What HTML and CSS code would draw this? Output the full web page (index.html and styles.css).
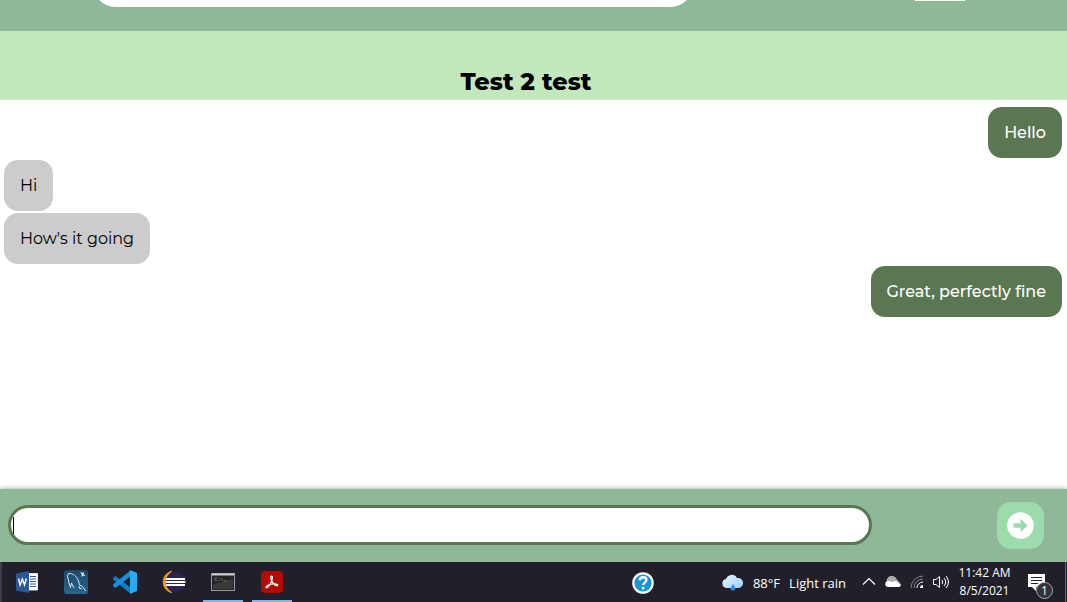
FILE: index.html
```html
<!DOCTYPE html>
<html lang="en">
<head>
<meta charset="utf-8">
<title>Test 2 test</title>
<link rel="stylesheet" href="styles.css">
</head>
<body>
<header class="topbar">
  <input class="search" type="search" aria-label="Search">
  <a class="nav-link" href="#" aria-label="Messages"></a>
</header>
<h1 class="chat-title">Test 2 test</h1>
<main class="messages">
  <p class="bubble sent">Hello</p>
  <p class="bubble received">Hi</p>
  <p class="bubble received">How's it going</p>
  <p class="bubble sent">Great, perfectly fine</p>
</main>
<form class="composer">
  <div class="field">
    <input class="message-input" type="text" aria-label="Message">
    <span class="caret"></span>
  </div>
  <button class="send" type="button" aria-label="Send">
    <svg width="27" height="27" viewBox="0 0 27 27"><circle cx="13.5" cy="13.5" r="13.3" fill="#fff"/><path d="M6.500 11.200h7V6.800l7.200 6.700-7.200 6.700v-4.400h-7z" fill="#9ddbad"/></svg>
  </button>
</form>
<footer class="taskbar">
  <nav class="apps">
    <button class="app" aria-label="Word">
      <svg width="24" height="24" viewBox="0 0 24 24"><path d="M11 3.500h11.500v16.500H11z" fill="#fff" stroke="#dfe6f1"/><path d="M15 6.500h6M15 9h6M15 11.500h6M15 14h6M15 16.500h6" stroke="#2b579a"/><path d="M1 3.500 14 1v22L1 20.500z" fill="#2b579a"/><path d="m3.500 8.500 1.600 6.500 2.200-6 2.200 6 1.800-6.500" fill="none" stroke="#fff" stroke-width="1.400"/></svg>
    </button>
    <button class="app" aria-label="MySQL Workbench">
      <svg width="24" height="24" viewBox="0 0 24 24"><defs><linearGradient id="sea" x2="0" y2="1"><stop stop-color="#1c4668"/><stop offset="1" stop-color="#28668e"/></linearGradient></defs><rect width="24" height="24" rx="3" fill="url(#sea)"/><path d="M6.500 17.500 5 13 3.500 6l1-2.500C9 3 13 6.500 14.500 11l1 4 3 1.500 3 4.500M6.500 17.500 7.500 13l2.500 5M15.500 16l-.5 2 3 1" fill="none" stroke="#d5e6f0" stroke-width="1"/><path d="m16 2 2.500 1L20 2l-.5 2.500L22 6l-3-.3L17.500 7l.3-2.500z" fill="#e6f1f7"/></svg>
    </button>
    <button class="app" aria-label="Visual Studio Code">
      <svg width="24" height="24" viewBox="0 0 24 24"><path d="m0 8 2.500-2L18 18v6L0 9.500z" fill="#0b7fc7"/><path d="m0 16 2.500 2L18 6V0L0 14.500z" fill="#148fd8"/><path d="m17 0 7 3v18l-7 3z" fill="#2aaaf2"/></svg>
    </button>
    <button class="app" aria-label="Eclipse">
      <svg width="24" height="24" viewBox="0 0 24 24"><path d="M10 1.200a11 11 0 0 0 0 21.600A12.500 12.500 0 0 1 10 1.200z" fill="#f7941e" stroke="#f7941e"/><circle cx="13.500" cy="12" r="10" fill="#2c2255"/><path d="M4 9h19M3.500 12h20M4 15h19" stroke="#fff" stroke-width="2"/></svg>
    </button>
    <button class="app open" aria-label="Command Prompt">
      <svg width="24" height="24" viewBox="0 0 24 24"><rect x=".5" y="3.500" width="23" height="17" fill="#242525" stroke="#999"/><path d="M1 4.500h22" stroke="#ccc" stroke-width="2"/><path d="M2 14 22 9v10H2z" fill="#383a3a"/><path d="M6.500 8H4v2.500h2.500M8.500 8v.8M8.500 10v.8M10 8l2 3M13 11h3" fill="none" stroke="#777" stroke-width=".8"/></svg>
    </button>
    <button class="app open" aria-label="Acrobat Reader">
      <svg width="22" height="22" viewBox="0 0 22 22"><rect width="22" height="22" rx="4" fill="#b30b00"/><path d="M10.500 5c2 0 .5 5-1.500 8.500-2 3.300-4 4-4 2.700 0-1.500 4-3 7-3.200 4-.3 5.500.7 4.500 1.600-1.500 1-5-2.200-6-5.300C9.700 7 9.500 5 10.500 5z" fill="none" stroke="#fff" stroke-width="1.200"/></svg>
    </button>
  </nav>
  <div class="tray">
    <button class="tray-icon help" aria-label="Help">
      <svg width="24" height="24" viewBox="0 0 24 24"><circle cx="12" cy="12" r="9.700" fill="#1297d8" stroke="#fff" stroke-width="2.200"/><path d="M8.800 9.300c.2-2 1.400-3 3.300-3 2 0 3.300 1.100 3.300 2.800 0 2.600-3.200 2.500-3.200 5" fill="none" stroke="#fff" stroke-width="2.400"/><circle cx="12.100" cy="17" r="1.500" fill="#fff"/></svg>
    </button>
    <button class="weather">
      <svg width="22" height="18" viewBox="0 0 22 18"><defs><linearGradient id="cloud" x2="1" y2="1"><stop stop-color="#e8f7ff"/><stop offset="1" stop-color="#9cd1fa"/></linearGradient></defs><path d="M4.500 14a4.500 4.500 0 0 1-.5-8.900 6 6 0 0 1 11-1.100A5 5 0 1 1 17 14z" fill="url(#cloud)"/><path d="M11 10c3.500 4.500 2.500 6.500 0 6.500s-3.500-2 0-6.500z" fill="#2f8fe3"/></svg>
      <span>88°F</span><span>Light rain</span>
    </button>
    <button class="tray-icon" aria-label="Show hidden icons">
      <svg width="14" height="10" viewBox="0 0 14 10"><path d="m1 7.500 6-6 6 6" fill="none" stroke="#fff" stroke-width="1.200"/></svg>
    </button>
    <button class="tray-icon" aria-label="OneDrive">
      <svg width="18" height="12" viewBox="0 0 18 12"><path d="M3 7a5 5 0 0 1 9.500-4L16 7z" fill="#aaa"/><path d="M4 11a3 3 0 1 1 1.500-5.700L9 6a4 4 0 0 1 5.500 1 2 2 0 0 1 .5 4z" fill="#fff"/></svg>
    </button>
    <button class="tray-icon" aria-label="Network">
      <svg width="14" height="14" viewBox="0 0 14 14"><g fill="none" stroke="#85858a"><path d="M1 13A12 12 0 0 1 13 1"/><path d="M4 13a9 9 0 0 1 9-9"/><path d="M7 13a6 6 0 0 1 6-6" stroke="#fff"/></g><path d="M10 13a3 3 0 0 1 3-3v3z" fill="#fff"/></svg>
    </button>
    <button class="tray-icon" aria-label="Volume">
      <svg width="18" height="16" viewBox="0 0 18 16"><path d="M1.500 5.500H4l3.500-3v11L4 10.500H1.500zM10 6q1.500 2 0 4M12 4q3.500 4 0 8M14 2q5 6 0 12" fill="none" stroke="#fff"/></svg>
    </button>
    <time class="clock"><span>11:42 AM</span><span>8/5/2021</span></time>
    <button class="tray-icon notices" aria-label="Notifications">
      <svg width="17" height="17" viewBox="0 0 17 17"><path d="M0 0h17v13H8v4l-4-4H0z" fill="#fff"/><path d="M3 3.500h11M3 6.500h11M3 9.500h7" stroke="#211f29"/></svg>
      <span class="badge">1</span>
    </button>
  </div>
</footer>
</body>
</html>
```
FILE: styles.css
```css
* { box-sizing: border-box; }

body {
  margin: 0;
  min-height: 100vh;
  display: flex;
  flex-direction: column;
  font-family: Montserrat, Inter, sans-serif;
  font-size: 16px;
  background: #fff;
}

button {
  font: inherit;
  color: inherit;
  background: none;
  border: 0;
  padding: 0;
}

svg { display: block; flex: none; }

.topbar {
  height: 31px;
  padding: 0 102px 24px 92px;
  display: flex;
  justify-content: space-between;
  align-items: flex-end;
  overflow: hidden;
  background: #8fb898;
}

.search {
  width: 69%;
  height: 48px;
  flex: none;
  border: 0;
  border-radius: 24px;
  background: #fff;
}

.nav-link {
  width: 50px;
  height: 20px;
  margin-bottom: 6px;
  border-bottom: 1px solid #fff;
}

.chat-title {
  margin: 0;
  padding: 36px 15px 3px 0;
  text-align: center;
  font-size: 24px;
  line-height: 30px;
  font-weight: 800;
  background: #c3e8bd;
}

.messages {
  flex: 1;
  display: flex;
  flex-direction: column;
  gap: 2px;
  padding: 7px 5px 7px 4px;
}

.bubble {
  margin: 0;
  padding: 16px;
  border-radius: 14px;
  line-height: 19px;
}

.sent {
  align-self: flex-end;
  color: #fff;
  background: #5b7751;
  font-weight: 500;
}

.received {
  align-self: flex-start;
  color: #000;
  background: #ccc;
}

.composer {
  display: flex;
  align-items: flex-start;
  justify-content: space-between;
  padding: 13px 23px 13px 8px;
  background: #8fb898;
  box-shadow: 0 0 5px rgba(0, 0, 0, .4);
}

.field {
  position: relative;
  width: 83.400%;
  margin-top: 3px;
}

.message-input {
  display: block;
  width: 100%;
  height: 40px;
  padding: 0 2px;
  border: 3px solid #5b7751;
  border-radius: 20px;
  background: #fff;
  font: inherit;
}

.caret {
  position: absolute;
  left: 5px;
  top: 12px;
  width: 1px;
  height: 17px;
  background: #000;
}

.send {
  display: grid;
  place-items: center;
  width: 47px;
  height: 47px;
  border-radius: 14px;
  background: #9ddbad;
}

.taskbar {
  position: relative;
  height: 40px;
  display: flex;
  justify-content: space-between;
  padding: 0 10px 0 5px;
  border-left: 2px solid #3d3d46;
  color: #fff;
  background: #211f29;
  font-family: "Segoe UI", "Open Sans", sans-serif;
  font-size: 13px;
}

.apps { display: flex; gap: 9px; }

.app {
  width: 40px;
  display: grid;
  place-items: center;
  border-bottom: 2px solid transparent;
  border-top: 2px solid transparent;
}

.app.open { border-bottom-color: #76b9ed; }

.tray { display: flex; align-items: center; }

.tray-icon {
  width: 24px;
  display: grid;
  place-items: center;
}

.help {
  margin-right: 67px;
  padding-top: 2px;
}

.weather {
  display: flex;
  align-items: center;
  gap: 9px;
  margin-right: 11px;
  padding-top: 2px;
  white-space: nowrap;
}

.clock {
  width: 63px;
  text-align: center;
  font-size: 12px;
  line-height: 18px;
}

.clock span { display: block; }

.notices {
  position: relative;
  width: 41px;
}

.badge {
  position: absolute;
  left: 20px;
  top: 8px;
  width: 17px;
  height: 17px;
  border: 1px solid #aaa;
  border-radius: 50%;
  background: #333239;
  font-size: 12px;
  line-height: 15px;
}

.taskbar::after {
  content: "";
  position: absolute;
  right: 1px;
  top: 0;
  bottom: 0;
  width: 1px;
  background: #66656c;
}
```
